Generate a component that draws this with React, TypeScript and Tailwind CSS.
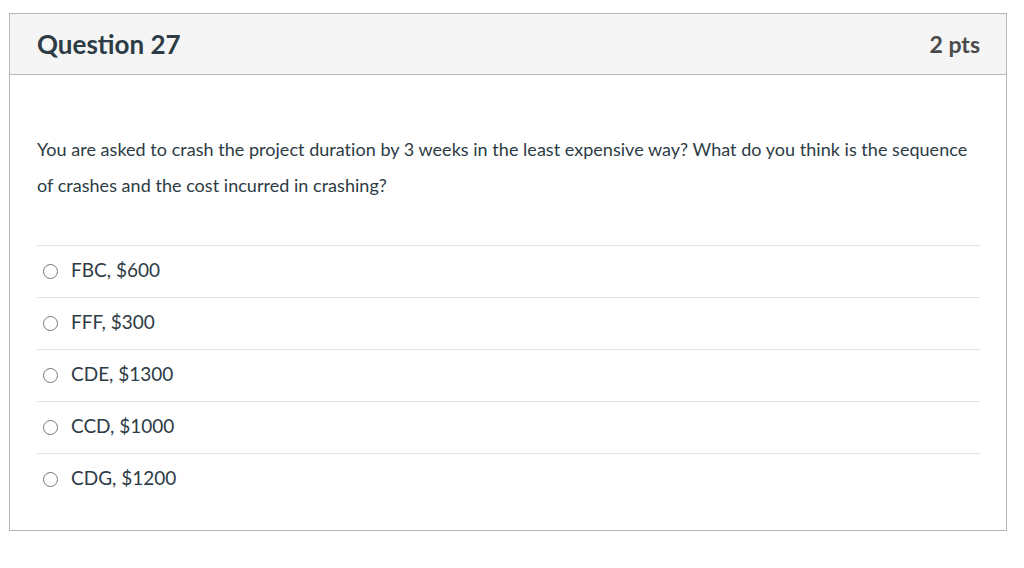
import React from "react";

const options = ["FBC, $600", "FFF, $300", "CDE, $1300", "CCD, $1000", "CDG, $1200"];

export default function App() {
  return (
    <div className="w-[1024px] h-[568px] bg-white pt-[13px] pl-[9px]" style={{ fontFamily: "Lato, 'Noto Sans', sans-serif" }}>
      <div className="w-[998px] border border-[#b7b7b7] text-[#2d3b45]">
        <div className="h-[61px] bg-[#f5f5f5] border-b border-[#b7b7b7] flex items-center justify-between pl-[27px] pr-[26px]">
          <h2 className="text-[26px] font-bold leading-none">Question 27</h2>
          <div className="text-[23px] font-bold text-[#4a4a4a] leading-none">2 pts</div>
        </div>
        <div className="pl-[27px] pr-[26px] pt-[56px] pb-[25px]">
          <p className="text-[18px] tracking-[0.03px] leading-[36px]">
            You are asked to crash the project duration by 3 weeks in the least expensive way? What do you think is the sequence of crashes and the cost incurred in crashing?
          </p>
          <div className="mt-[42px]">
            {options.map((o) => (
              <div key={o} className="h-[52px] border-t border-[#e2e2e2] flex items-center">
                <span className="ml-[6px] w-[15px] h-[15px] rounded-full border border-[#777] bg-white"></span>
                <span className="ml-[13px] text-[19px] leading-none -mt-[4px]">{o}</span>
              </div>
            ))}
          </div>
        </div>
      </div>
    </div>
  );
}
